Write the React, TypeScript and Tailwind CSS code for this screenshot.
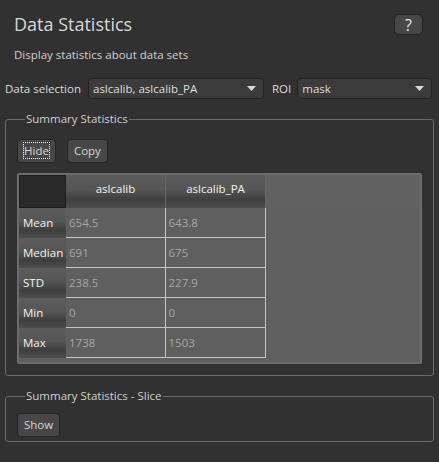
const stats = [
  { name: 'Mean', a: '654.5', b: '643.8' },
  { name: 'Median', a: '691', b: '675' },
  { name: 'STD', a: '238.5', b: '227.9' },
  { name: 'Min', a: '0', b: '0' },
  { name: 'Max', a: '1738', b: '1503' },
]

function Caret() {
  return (
    <svg width="9" height="5" viewBox="0 0 9 5" className="shrink-0">
      <path d="M0 0 L9 0 L4.5 5 Z" fill="#d8d8d8" />
    </svg>
  )
}

function Combo({ value, className }: { value: string; className: string }) {
  return (
    <div
      className={`flex h-[21px] items-center justify-between rounded-[4px] border border-[#232323] bg-[#3b3b3b] pl-[4px] pr-[7px] text-[#dedede] ${className}`}
    >
      <span>{value}</span>
      <Caret />
    </div>
  )
}

function Btn({ children, focus }: { children: string; focus?: boolean }) {
  return (
    <button className="h-[24px] rounded-[4px] border border-[#262626] bg-[#474747] px-[6px] text-[11.5px] text-[#d6d6d6]">
      <span className={focus ? 'outline outline-1 outline-dotted outline-white' : ''}>{children}</span>
    </button>
  )
}

// Qt style header gradient
const headGrad = 'bg-[linear-gradient(to_bottom,#5c5c5c_0%,#555_45%,#3e3e3e_75%,#4e4e4e_100%)]'

export default function App() {
  return (
    <div
      className="h-[462px] w-[439px] overflow-hidden bg-[#313131] text-[11.5px] text-[#dcdcdc]"
      style={{ fontFamily: '"Open Sans", "Noto Sans", sans-serif' }}
    >
      <div className="flex items-start justify-between pl-[14px] pr-[16px] pt-[11px]">
        <h1 className="text-[18px] leading-[26px] text-[#d8d8d8]">Data Statistics</h1>
        <button className="mt-[3px] flex h-[21px] w-[29px] items-center justify-center rounded-[5px] border border-[#222] bg-[#474747] text-[16px] leading-none text-[#e6e6e6]">
          ?
        </button>
      </div>
      <p className="mt-[10px] pl-[14px] leading-[16px] text-[#d0d0d0]">Display statistics about data sets</p>

      <div className="mt-[15px] flex items-center pl-[5px] pr-[7px]">
        <span className="mr-[7px]">Data selection</span>
        <Combo value="aslcalib, aslcalib_PA" className="w-[176px]" />
        <span className="ml-[8px] mr-[6px]">ROI</span>
        <Combo value="mask" className="flex-1" />
      </div>

      <fieldset className="mx-[5px] mt-[13px] h-[264px] rounded-[3px] border border-[#6a6a6a] px-[11px]">
        <legend className="ml-[8px] px-[1px] leading-[14px] text-[#cfcfcf]">Summary Statistics</legend>
        <div className="mt-[13px] flex gap-[11px]">
          <Btn focus>Hide</Btn>
          <Btn>Copy</Btn>
        </div>

        <div className="mt-[10px] h-[191px] rounded-[2px] border-2 border-[#6c6c6c] bg-[#5f5f5f]">
          <div className="flex h-[33px] bg-[#616161]">
            <div className="w-[47px] border border-[#1c1c1c] bg-[#2a2a2a]" />
            <div className={`w-[100px] border-r border-[#666] pt-[5px] text-center text-[#f0f0f0] ${headGrad}`}>aslcalib</div>
            <div className={`w-[100px] border-r border-[#666] pt-[5px] text-center text-[#f0f0f0] ${headGrad}`}>aslcalib_PA</div>
          </div>
          <div className="flex">
            <div className="w-[47px]">
              {stats.map((s) => (
                <div key={s.name} className={`flex h-[30px] items-center pl-[4px] text-[#f2f2f2] ${headGrad}`}>
                  {s.name}
                </div>
              ))}
            </div>
            <div className="grid w-[200px] grid-cols-2 border-r border-[#c4c4c4]">
              {stats.map((s) => [
                <div key={s.name + 'a'} className="flex h-[30px] items-center border-b border-r border-[#c4c4c4] pl-[3px] text-[#a6a6a6]">
                  {s.a}
                </div>,
                <div key={s.name + 'b'} className="flex h-[30px] items-center border-b border-[#c4c4c4] pl-[3px] text-[#a6a6a6]">
                  {s.b}
                </div>,
              ])}
            </div>
          </div>
        </div>
      </fieldset>

      <fieldset className="mx-[5px] mt-[13px] h-[53px] rounded-[3px] border border-[#6a6a6a] px-[11px]">
        <legend className="ml-[8px] px-[1px] leading-[14px] text-[#cfcfcf]">Summary Statistics - Slice</legend>
        <div className="mt-[10px]">
          <Btn>Show</Btn>
        </div>
      </fieldset>
    </div>
  )
}
